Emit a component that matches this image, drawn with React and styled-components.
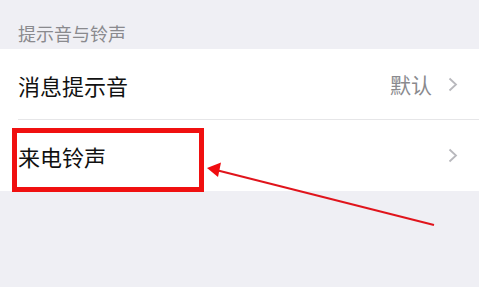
import React from "react";
import styled, { createGlobalStyle } from "styled-components";

const Global = createGlobalStyle`
  html, body {
    margin: 0;
    padding: 0;
    background: #efeff4;
  }
  body {
    font-family: "Noto Sans CJK SC", "Noto Sans", sans-serif;
  }
`;

const Page = styled.div`
  position: relative;
  width: 479px;
  height: 287px;
  overflow: hidden;
  background: #efeff4;
`;

const SectionTitle = styled.div`
  height: 49px;
  box-sizing: border-box;
  padding: 16px 18px 0;
  display: flex;
  align-items: center;
  font-size: 18px;
  color: #8a8a8e;
`;

const Group = styled.div`
  background: #fff;
`;

const Row = styled.div`
  height: 71px;
  display: flex;
  align-items: center;
  padding: 0 21px 0 18px;
  box-sizing: border-box;
  position: relative;

  &:not(:last-child)::after {
    content: "";
    position: absolute;
    left: 18px;
    right: 0;
    bottom: 0;
    height: 1px;
    background: #e6e6e8;
  }
`;

const Label = styled.span`
  flex: 1;
  font-size: 22px;
  color: #111;
  line-height: 1;
`;

const Value = styled.span`
  font-size: 21px;
  color: #8a8a8e;
  margin-right: 16px;
  line-height: 1;
`;

const Chevron = () => (
  <svg width="10" height="15" viewBox="0 0 10 15">
    <polyline
      points="1.5,1.5 8,7.5 1.5,13.5"
      fill="none"
      stroke="#b8b8bd"
      strokeWidth="1.8"
    />
  </svg>
);

const HighlightBox = styled.div`
  position: absolute;
  left: 12px;
  top: 128px;
  width: 192px;
  height: 64px;
  box-sizing: border-box;
  border: 5px solid #f01010;
`;

const ArrowLayer = styled.svg`
  position: absolute;
  left: 0;
  top: 0;
  pointer-events: none;
`;

export default function App() {
  return (
    <Page>
      <Global />
      <SectionTitle>提示音与铃声</SectionTitle>
      <Group>
        <Row>
          <Label>消息提示音</Label>
          <Value>默认</Value>
          <Chevron />
        </Row>
        <Row>
          <Label>来电铃声</Label>
          <Chevron />
        </Row>
      </Group>
      <HighlightBox />
      <ArrowLayer width="479" height="287">
        <line x1="434" y1="225" x2="216" y2="170" stroke="#e0141c" strokeWidth="2" />
        <polygon points="207,168 221,162.5 218,177" fill="#f00c10" />
      </ArrowLayer>
    </Page>
  );
}
